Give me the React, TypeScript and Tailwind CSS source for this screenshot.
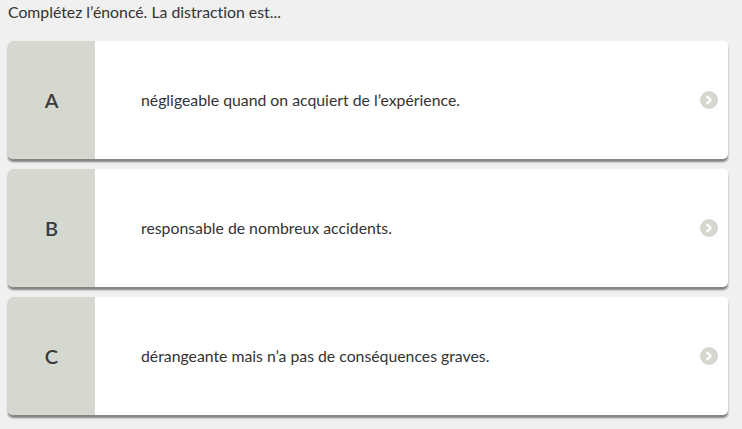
import React from "react"

const options = [
  { letter: "A", text: "négligeable quand on acquiert de l’expérience." },
  { letter: "B", text: "responsable de nombreux accidents." },
  { letter: "C", text: "dérangeante mais n’a pas de conséquences graves." },
]

function NextIcon() {
  return (
    <svg width="18" height="18" viewBox="0 0 18 18" aria-hidden="true">
      <circle cx="9" cy="9" r="9" fill="#d5d8ce" />
      <path d="M7.2 5.6 L10.6 9 L7.2 12.4" fill="none" stroke="#ffffff" strokeWidth="2.2" strokeLinecap="round" strokeLinejoin="round" />
    </svg>
  )
}

export default function App() {
  return (
    <div className="min-h-[429px] w-[742px] bg-[#f0f0f0] pl-2 pr-[14px] pt-[2px] text-[#333333] font-['Lato','Open_Sans',sans-serif] [font-variant-ligatures:none]">
      <p className="text-[15.8px] leading-[20px]">Complétez l’énoncé. La distraction est...</p>
      <div className="mt-[19px] flex flex-col gap-[10px]">
        {options.map((o) => (
          <button
            key={o.letter}
            className="flex h-[118px] w-full items-stretch overflow-hidden rounded-[5px] bg-white text-left shadow-[0_3px_2px_rgba(0,0,0,0.45)]"
          >
            <div className="flex w-[87px] shrink-0 items-center justify-center bg-[#d5d8ce] text-[20px] font-semibold text-[#3a3a3a]">
              {o.letter}
            </div>
            <div className="flex flex-1 items-center pl-[46px] text-[15.8px] text-[#333333]">{o.text}</div>
            <div className="flex items-center pr-[10px]">
              <NextIcon />
            </div>
          </button>
        ))}
      </div>
    </div>
  )
}
